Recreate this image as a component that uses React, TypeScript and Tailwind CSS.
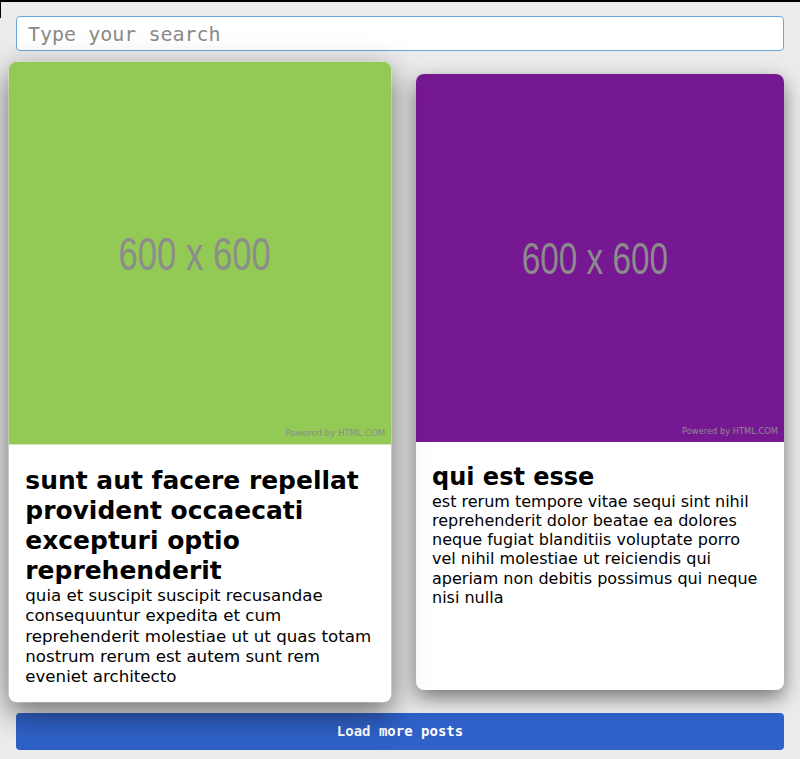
const posts = [
  {
    title: "sunt aut facere repellat provident occaecati excepturi optio reprehenderit",
    body: "quia et suscipit suscipit recusandae consequuntur expedita et cum reprehenderit molestiae ut ut quas totam nostrum rerum est autem sunt rem eveniet architecto",
    bg: "bg-[#93c955]",
    hovered: true,
  },
  {
    title: "qui est esse",
    body: "est rerum tempore vitae sequi sint nihil reprehenderit dolor beatae ea dolores neque fugiat blanditiis voluptate porro vel nihil molestiae ut reiciendis qui aperiam non debitis possimus qui neque nisi nulla",
    bg: "bg-[#771893]",
    hovered: false,
  },
];

function Placeholder({ bg }: { bg: string }) {
  return (
    <div className={`relative flex aspect-square w-full items-center justify-center ${bg}`}>
      <span className="mr-[11px] scale-x-[0.74] font-['Liberation_Sans',Arial,sans-serif] text-[45px] leading-none text-[#8c8c8c]">
        600 x 600
      </span>
      <span className="absolute right-[6px] bottom-[5px] font-['DejaVu_Sans',sans-serif] text-[8.3px] text-[#8c8c8c]">
        Powered by HTML.COM
      </span>
    </div>
  );
}

export default function App() {
  return (
    <div className="relative min-h-[759px] bg-[#ececec] px-4 pt-4 pb-[9px] font-['DejaVu_Sans',sans-serif]">
      {/* stray frame lines in the corner */}
      <div className="absolute left-0 top-0 h-[2px] w-full bg-black" />
      <div className="absolute left-0 top-0 h-[18px] w-px bg-black" />

      <input
        type="text"
        placeholder="Type your search"
        className="block h-[35px] w-full rounded-[4px] border border-[#6aa6d8] bg-white px-[11px] font-['DejaVu_Sans_Mono',monospace] text-[20px] text-black outline-none placeholder:text-[#8a8a8a]"
      />

      <div className="mt-[23px] grid grid-cols-2 gap-8">
        {posts.map((p) => (
          <div
            key={p.title}
            className={
              p.hovered
                ? "relative z-10 scale-[1.04] overflow-hidden rounded-lg bg-white shadow-[0_10px_30px_rgba(0,0,0,0.55)]"
                : "relative overflow-hidden rounded-lg bg-white shadow-[0_8px_20px_rgba(0,0,0,0.5)]"
            }
          >
            <Placeholder bg={p.bg} />
            <div className="px-4 pt-[21px] pb-4 text-black">
              <h2 className="text-[24px] font-bold leading-[1.2]">{p.title}</h2>
              <p className="text-[16px] leading-[1.2]">{p.body}</p>
            </div>
          </div>
        ))}
      </div>

      <button className="mt-[23px] block h-[37px] w-full rounded-[4px] bg-[#2f61c8] font-['DejaVu_Sans_Mono',monospace] text-[14px] font-bold text-white">
        Load more posts
      </button>
    </div>
  );
}
